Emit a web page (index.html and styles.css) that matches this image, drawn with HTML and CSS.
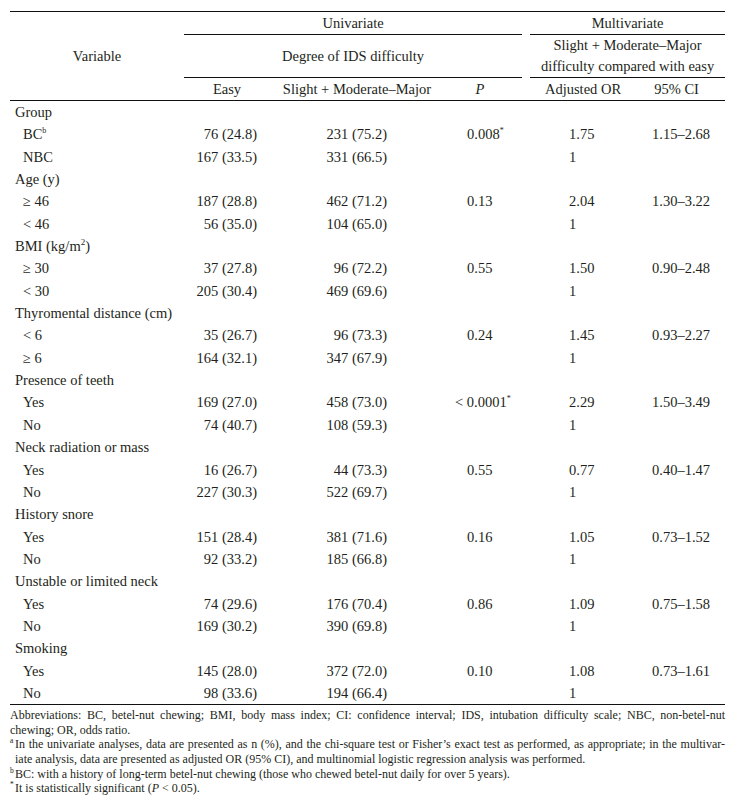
FILE: index.html
```html
<!DOCTYPE html>
<html lang="en">
<head>
<meta charset="utf-8">
<title>Table</title>
<link rel="stylesheet" href="styles.css">
</head>
<body>
<div class="page">
<table class="tbl">
<colgroup>
<col class="c-var"><col class="c-easy"><col class="c-slight"><col class="c-p"><col class="c-gap"><col class="c-or"><col class="c-ci">
</colgroup>
<thead>
<tr class="h1">
<th rowspan="3" class="var">Variable</th>
<th colspan="3" class="ul">Univariate</th>
<th class="gap"></th>
<th colspan="2" class="ul">Multivariate</th>
</tr>
<tr class="h2">
<th colspan="3" class="ul">Degree of IDS difficulty</th>
<th class="gap"></th>
<th colspan="2" class="ul two">Slight + Moderate–Major<br>difficulty compared with easy</th>
</tr>
<tr class="h3">
<th>Easy</th>
<th>Slight + Moderate–Major</th>
<th class="p"><i>P</i></th>
<th class="gap"></th>
<th>Adjusted OR</th>
<th class="ci-h">95% CI</th>
</tr>
</thead>
<tbody>
<tr class="cat"><td class="lab" colspan="7">Group</td></tr>
<tr><td class="lab">BC<sup>b</sup></td><td class="n1">76 (24.8)</td><td class="n2">231 (75.2)</td><td class="p">0.008<sup>*</sup></td><td></td><td class="or">1.75</td><td class="ci">1.15–2.68</td></tr>
<tr><td class="lab">NBC</td><td class="n1">167 (33.5)</td><td class="n2">331 (66.5)</td><td class="p"></td><td></td><td class="or">1</td><td class="ci"></td></tr>
<tr class="cat"><td class="lab" colspan="7">Age (y)</td></tr>
<tr><td class="lab">≥ 46</td><td class="n1">187 (28.8)</td><td class="n2">462 (71.2)</td><td class="p">0.13</td><td></td><td class="or">2.04</td><td class="ci">1.30–3.22</td></tr>
<tr><td class="lab">&lt; 46</td><td class="n1">56 (35.0)</td><td class="n2">104 (65.0)</td><td class="p"></td><td></td><td class="or">1</td><td class="ci"></td></tr>
<tr class="cat"><td class="lab" colspan="7">BMI (kg/m<sup class="sq">2</sup>)</td></tr>
<tr><td class="lab">≥ 30</td><td class="n1">37 (27.8)</td><td class="n2">96 (72.2)</td><td class="p">0.55</td><td></td><td class="or">1.50</td><td class="ci">0.90–2.48</td></tr>
<tr><td class="lab">&lt; 30</td><td class="n1">205 (30.4)</td><td class="n2">469 (69.6)</td><td class="p"></td><td></td><td class="or">1</td><td class="ci"></td></tr>
<tr class="cat"><td class="lab" colspan="7">Thyromental distance (cm)</td></tr>
<tr><td class="lab">&lt; 6</td><td class="n1">35 (26.7)</td><td class="n2">96 (73.3)</td><td class="p">0.24</td><td></td><td class="or">1.45</td><td class="ci">0.93–2.27</td></tr>
<tr><td class="lab">≥ 6</td><td class="n1">164 (32.1)</td><td class="n2">347 (67.9)</td><td class="p"></td><td></td><td class="or">1</td><td class="ci"></td></tr>
<tr class="cat"><td class="lab" colspan="7">Presence of teeth</td></tr>
<tr><td class="lab">Yes</td><td class="n1">169 (27.0)</td><td class="n2">458 (73.0)</td><td class="p"><span class="lt">&lt; </span>0.0001<sup>*</sup></td><td></td><td class="or">2.29</td><td class="ci">1.50–3.49</td></tr>
<tr><td class="lab">No</td><td class="n1">74 (40.7)</td><td class="n2">108 (59.3)</td><td class="p"></td><td></td><td class="or">1</td><td class="ci"></td></tr>
<tr class="cat"><td class="lab" colspan="7">Neck radiation or mass</td></tr>
<tr><td class="lab">Yes</td><td class="n1">16 (26.7)</td><td class="n2">44 (73.3)</td><td class="p">0.55</td><td></td><td class="or">0.77</td><td class="ci">0.40–1.47</td></tr>
<tr><td class="lab">No</td><td class="n1">227 (30.3)</td><td class="n2">522 (69.7)</td><td class="p"></td><td></td><td class="or">1</td><td class="ci"></td></tr>
<tr class="cat"><td class="lab" colspan="7">History snore</td></tr>
<tr><td class="lab">Yes</td><td class="n1">151 (28.4)</td><td class="n2">381 (71.6)</td><td class="p">0.16</td><td></td><td class="or">1.05</td><td class="ci">0.73–1.52</td></tr>
<tr><td class="lab">No</td><td class="n1">92 (33.2)</td><td class="n2">185 (66.8)</td><td class="p"></td><td></td><td class="or">1</td><td class="ci"></td></tr>
<tr class="cat"><td class="lab" colspan="7">Unstable or limited neck</td></tr>
<tr><td class="lab">Yes</td><td class="n1">74 (29.6)</td><td class="n2">176 (70.4)</td><td class="p">0.86</td><td></td><td class="or">1.09</td><td class="ci">0.75–1.58</td></tr>
<tr><td class="lab">No</td><td class="n1">169 (30.2)</td><td class="n2">390 (69.8)</td><td class="p"></td><td></td><td class="or">1</td><td class="ci"></td></tr>
<tr class="cat"><td class="lab" colspan="7">Smoking</td></tr>
<tr><td class="lab">Yes</td><td class="n1">145 (28.0)</td><td class="n2">372 (72.0)</td><td class="p">0.10</td><td></td><td class="or">1.08</td><td class="ci">0.73–1.61</td></tr>
<tr class="last"><td class="lab">No</td><td class="n1">98 (33.6)</td><td class="n2">194 (66.4)</td><td class="p"></td><td></td><td class="or">1</td><td class="ci"></td></tr>
</tbody>
</table>
<div class="notes">
<p class="note"><span class="jl">Abbreviations: BC, betel-nut chewing; BMI, body mass index; CI: confidence interval; IDS, intubation difficulty scale; NBC, non-betel-nut</span><span class="ln">chewing; OR, odds ratio.</span></p>
<p class="note hang"><span class="jl"><sup class="mk">a</sup>In the univariate analyses, data are presented as n (%), and the chi-square test or Fisher’s exact test as performed, as appropriate; in the multivar-</span><span class="ln">iate analysis, data are presented as adjusted OR (95% CI), and multinomial logistic regression analysis was performed.</span></p>
<p class="note hang"><sup class="mk">b</sup>BC: with a history of long-term betel-nut chewing (those who chewed betel-nut daily for over 5 years).</p>
<p class="note hang"><sup class="mk">*</sup>It is statistically significant (<i>P</i> &lt; 0.05).</p>
</div>
</div>
</body>
</html>
```

FILE: styles.css
```css
html, body {
  margin: 0;
  padding: 0;
  background: #ffffff;
}

body {
  color: #231f20;
  font-family: "Liberation Serif", "Times New Roman", serif;
}

.page {
  width: 715px;
  padding: 11px 15px 0 10px;
}

.tbl {
  width: 715px;
  table-layout: fixed;
  border-collapse: separate;
  border-spacing: 0;
  border-top: 1px solid #111;
  font-size: 14.5px;
}

.c-var { width: 174px; }
.c-easy { width: 86px; }
.c-slight { width: 174px; }
.c-p { width: 78px; }
.c-gap { width: 8px; }
.c-or { width: 106px; }
.c-ci { width: 89px; }

.tbl th {
  font-weight: normal;
  padding: 0;
  text-align: center;
  vertical-align: middle;
}

.tbl .ul {
  border-bottom: 1px solid #111;
}

.h1 th {
  height: 22px;
  line-height: 22px;
}

.h2 th {
  height: 41px;
  line-height: 21px;
}

.h3 th {
  height: 22px;
  line-height: 22px;
  border-bottom: 1px solid #111;
}

.tbl th.var {
  border-bottom: 1px solid #111;
}

.tbl th.p {
  padding-right: 6px;
}

.tbl th.ci-h {
  padding-right: 8px;
}

.tbl td {
  padding: 0;
  height: 22.35px;
  line-height: 22.35px;
  white-space: nowrap;
}

.tbl .last td {
  border-bottom: 1px solid #111;
}

.tbl td.lab {
  padding-left: 13px;
}

.tbl .cat td.lab {
  padding-left: 5px;
}

.tbl td.n1 {
  text-align: right;
  padding-right: 13px;
}

.tbl td.n2 {
  text-align: right;
  padding-right: 57px;
}

.tbl td.p {
  padding-left: 23px;
}

.tbl .lt {
  margin-left: -12px;
}

.tbl td.or {
  padding-left: 39px;
}

.tbl td.ci {
  padding-left: 16px;
}

.tbl sup {
  font-size: 8px;
  line-height: 0;
  vertical-align: 6px;
}

.tbl sup.sq {
  font-size: 9px;
}

.notes {
  padding-top: 3px;
  font-size: 12px;
  line-height: 14.6px;
}

.note {
  margin: 0;
}

.note.hang {
  padding-left: 5px;
}

.jl {
  display: block;
  text-align: justify;
  text-align-last: justify;
}

.ln {
  display: block;
}

.mk {
  font-size: 7.5px;
  line-height: 0;
  vertical-align: 5px;
  margin-left: -5px;
  display: inline-block;
  width: 5px;
}
```
